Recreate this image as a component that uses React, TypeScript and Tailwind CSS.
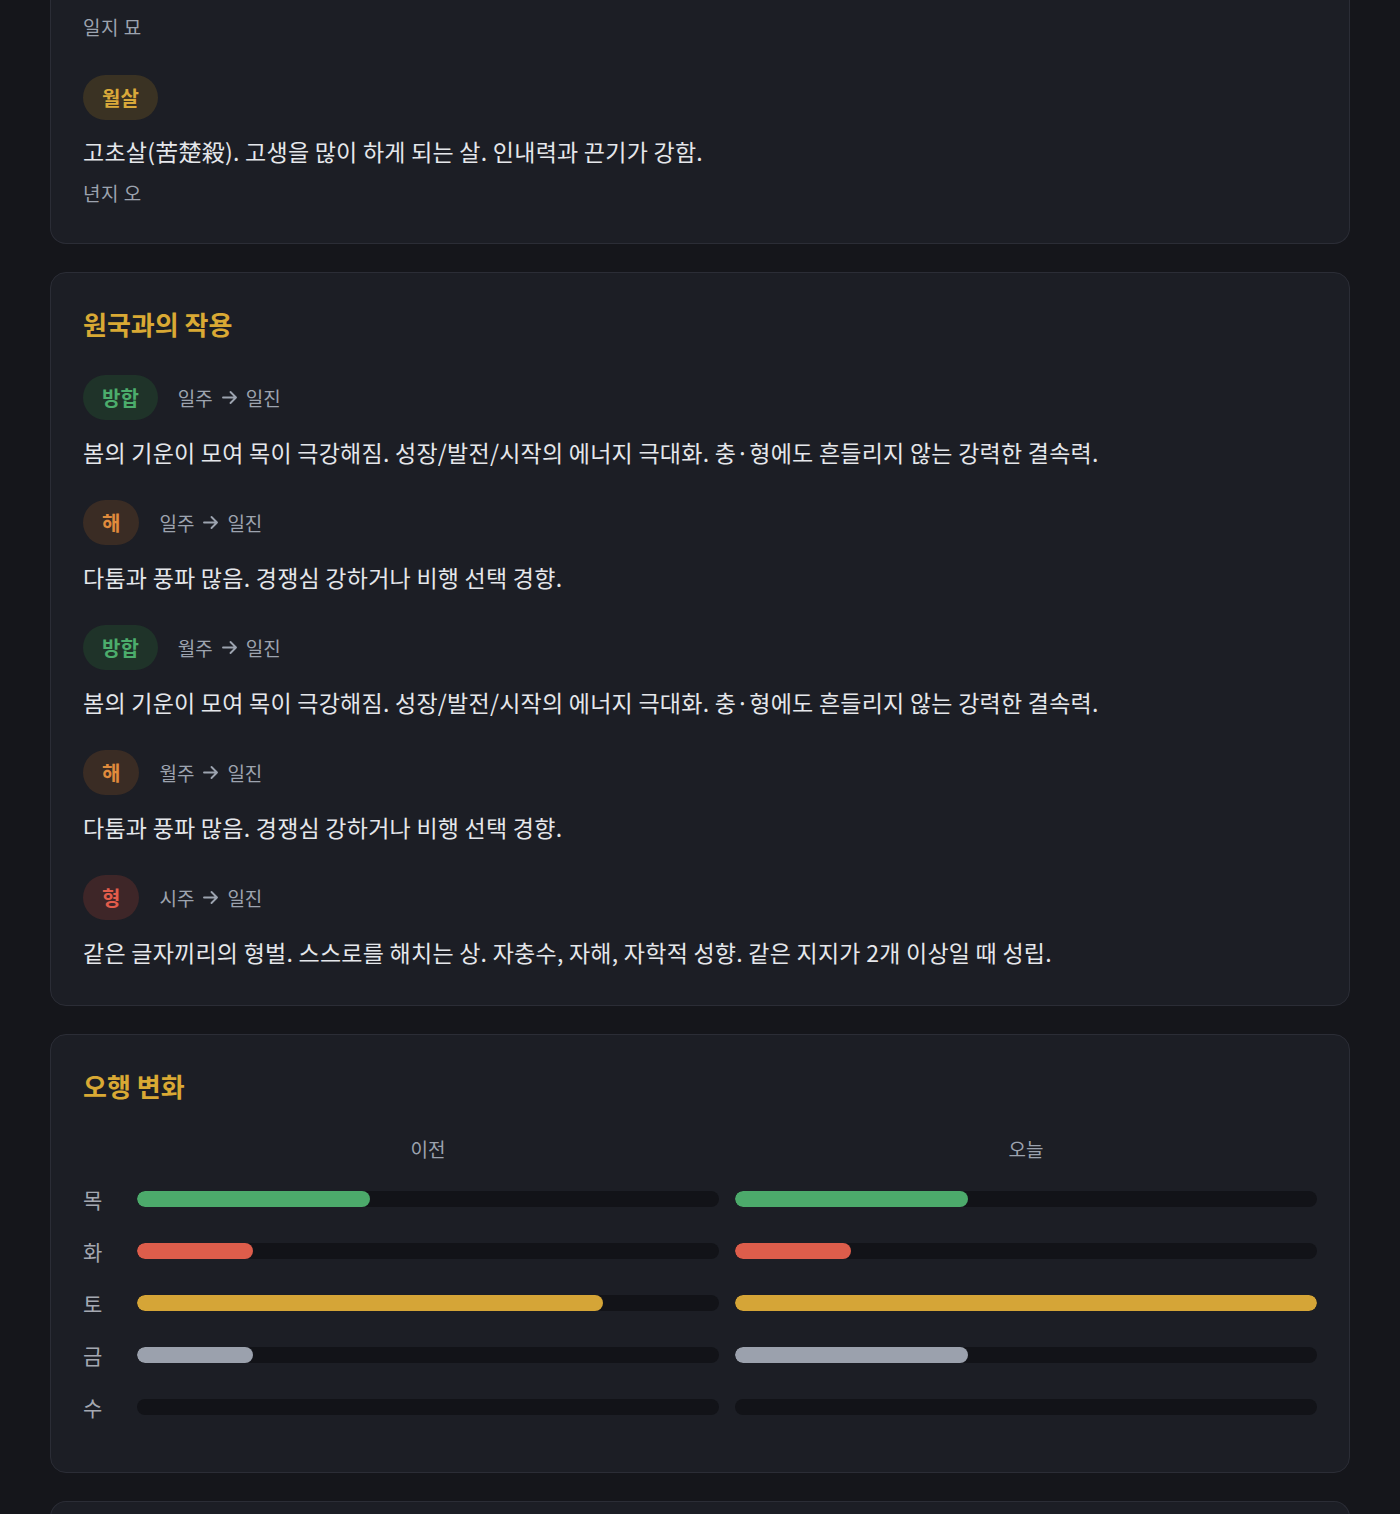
import React from "react";

const font = "font-['Noto_Sans_CJK_KR','Noto_Sans',sans-serif]";

type Tone = "gold" | "green" | "orange" | "red";

const toneCls: Record<Tone, string> = {
  gold: "bg-[#3a3223] text-[#d9a93a]",
  green: "bg-[#1f3329] text-[#4cad6c]",
  orange: "bg-[#3a2c24] text-[#e08b3c]",
  red: "bg-[#3e2628] text-[#e25c4b]",
};

function Badge({ tone, children }: { tone: Tone; children: React.ReactNode }) {
  return (
    <span
      className={`inline-flex h-[45px] items-center rounded-full px-[19px] text-[20px] font-bold leading-none ${toneCls[tone]}`}
    >
      {children}
    </span>
  );
}

function Arrow() {
  return (
    <svg width="17" height="17" viewBox="0 0 17 17" fill="none" className="text-[#9ca3af]">
      <path
        d="M2 8.5h13M9.5 3l5.5 5.5L9.5 14"
        stroke="currentColor"
        strokeWidth="1.9"
        strokeLinecap="round"
        strokeLinejoin="round"
      />
    </svg>
  );
}

const interactions: { tone: Tone; label: string; from: string; text: string }[] = [
  {
    tone: "green",
    label: "방합",
    from: "일주",
    text: "봄의 기운이 모여 목이 극강해짐. 성장/발전/시작의 에너지 극대화. 충·형에도 흔들리지 않는 강력한 결속력.",
  },
  { tone: "orange", label: "해", from: "일주", text: "다툼과 풍파 많음. 경쟁심 강하거나 비행 선택 경향." },
  {
    tone: "green",
    label: "방합",
    from: "월주",
    text: "봄의 기운이 모여 목이 극강해짐. 성장/발전/시작의 에너지 극대화. 충·형에도 흔들리지 않는 강력한 결속력.",
  },
  { tone: "orange", label: "해", from: "월주", text: "다툼과 풍파 많음. 경쟁심 강하거나 비행 선택 경향." },
  {
    tone: "red",
    label: "형",
    from: "시주",
    text: "같은 글자끼리의 형벌. 스스로를 해치는 상. 자충수, 자해, 자학적 성향. 같은 지지가 2개 이상일 때 성립.",
  },
];

const elements: { name: string; color: string; before: number; after: number }[] = [
  { name: "목", color: "bg-[#4caa6b]", before: 40, after: 40 },
  { name: "화", color: "bg-[#dd5d4b]", before: 20, after: 20 },
  { name: "토", color: "bg-[#d5a537]", before: 80, after: 100 },
  { name: "금", color: "bg-[#9ba1ad]", before: 20, after: 40 },
  { name: "수", color: "bg-[#4a8fd6]", before: 0, after: 0 },
];

function Bar({ pct, color }: { pct: number; color: string }) {
  return (
    <div className="h-4 w-full overflow-hidden rounded-full bg-[#121318]">
      {pct > 0 && <div className={`h-full rounded-full ${color}`} style={{ width: `${pct}%` }} />}
    </div>
  );
}

const desc = "text-[23px] leading-[32px] tracking-[0.25px] text-[#e5e7eb]";
const meta = "text-[19px] leading-[28px] text-[#9ca3af]";

export default function App() {
  return (
    <div className={`min-h-screen bg-[#15161b] ${font}`}>
      <div className="mx-auto flex w-[1300px] flex-col gap-7">
        {/* Card 1 (scrolled, top cut off) */}
        <div className="rounded-b-2xl border-x border-b border-[#2b2d36] bg-[#1c1e25] px-8 pb-[36px] pt-[13px]">
          <div className={`${meta} tracking-[0.5px]`}>일지 묘</div>
          <div className="mt-[34px]">
            <Badge tone="gold">월살</Badge>
            <p className={`mt-[15px] ${desc}`}>
              고초살(苦楚殺). 고생을 많이 하게 되는 살. 인내력과 끈기가 강함.
            </p>
            <div className={`mt-3 ${meta} tracking-[0.5px]`}>년지 오</div>
          </div>
        </div>

        {/* Card 2 */}
        <div className="rounded-2xl border border-[#2b2d36] bg-[#1c1e25] px-8 pb-[37px] pt-8">
          <h2 className="text-[26px] font-bold leading-[38px] text-[#d9a934]">원국과의 작용</h2>
          <div className="mt-8 flex flex-col gap-8">
            {interactions.map((it, i) => (
              <div key={i}>
                <div className="flex items-center gap-5">
                  <Badge tone={it.tone}>{it.label}</Badge>
                  <span className={`inline-flex items-center gap-2 ${meta}`}>
                    <span>{it.from}</span>
                    <Arrow />
                    <span>일진</span>
                  </span>
                </div>
                <p className={`mt-4 ${desc}`}>{it.text}</p>
              </div>
            ))}
          </div>
        </div>

        {/* Card 3 */}
        <div className="rounded-2xl border border-[#2b2d36] bg-[#1c1e25] px-8 pb-[51px] pt-8">
          <h2 className="text-[26px] font-bold leading-[38px] text-[#d9a934]">오행 변화</h2>
          <div className="mt-[30px] grid grid-cols-[38px_1fr_1fr] gap-x-4">
            <div />
            <div className={`text-center ${meta}`}>이전</div>
            <div className={`text-center ${meta}`}>오늘</div>
          </div>
          <div className="mt-[22px] flex flex-col gap-6">
            {elements.map((e) => (
              <div key={e.name} className="grid h-7 grid-cols-[38px_1fr_1fr] items-center gap-x-4">
                <span className="text-[21px] leading-[28px] text-[#a4a8b1]">{e.name}</span>
                <Bar pct={e.before} color={e.color} />
                <Bar pct={e.after} color={e.color} />
              </div>
            ))}
          </div>
        </div>

        {/* Card 4 (cut off at bottom) */}
        <div className="h-[120px] rounded-t-2xl border-x border-t border-[#2b2d36] bg-[#1c1e25]" />
      </div>
    </div>
  );
}
